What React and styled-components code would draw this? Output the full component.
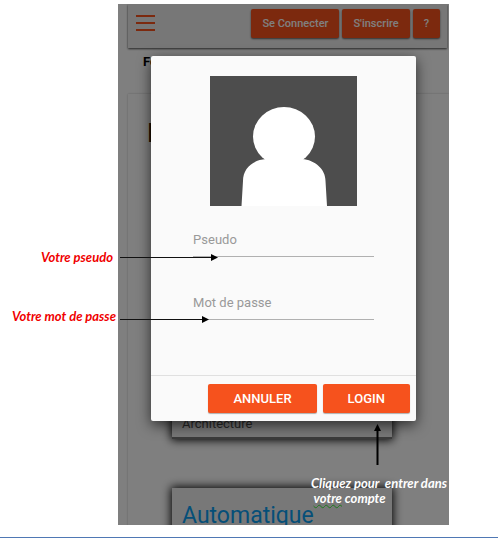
import React from "react";
import styled, { createGlobalStyle } from "styled-components";

const GlobalStyle = createGlobalStyle`
  *, *::before, *::after { box-sizing: border-box; }
  body { margin: 0; background: #fff; font-family: Roboto, "Open Sans", sans-serif; }
  h1, h2, p { margin: 0; }
`;

const Page = styled.div`
  position: relative;
  display: flex;
  flex-direction: column;
  gap: 12px;
  height: 100vh;
  padding-top: 4px;
`;

const Screen = styled.main`
  position: relative;
  flex: 1;
  min-height: 0;
  margin: 0 49px 0 118px;
  overflow: hidden;
  background: #fff;
`;

const PageRule = styled.hr`
  width: 100%;
  margin: 0;
  border: 0;
  border-top: 1px solid #4f78b4;
`;

const AppContent = styled.div`
  display: flex;
  flex-direction: column;
  padding-left: 10px;
`;

const Toolbar = styled.header`
  display: flex;
  align-items: flex-start;
  gap: 3px;
  height: 44px;
  margin-right: 2px;
  padding: 5px 7px 0 8px;
  background: #efefef;
  box-shadow: 0 1px 2px rgba(0, 0, 0, 0.7);
`;

const MenuButton = styled.button`
  display: flex;
  margin: 5px auto 0 0;
  padding: 0;
  border: 0;
  background: none;
`;

const ToolbarButton = styled.button`
  height: 29px;
  padding: 0 11px;
  border: 0;
  border-radius: 2px;
  background: #f9531c;
  color: #fff;
  font: 500 11px/29px Roboto, sans-serif;
  white-space: nowrap;
  box-shadow: 0 1px 2px rgba(0, 0, 0, 0.6);
`;

const Subtitle = styled.h1`
  height: 46px;
  padding: 6px 0 0 15px;
  color: #000;
  font-size: 13px;
  line-height: 16px;
  font-weight: 700;
`;

const Panel = styled.section`
  padding: 24px 57px 0 19px;
  box-shadow: 0 0 2px rgba(0, 0, 0, 0.25);
`;

const PanelTitle = styled.h2`
  color: #331a00;
  font-size: 26px;
  line-height: 30px;
  font-weight: 500;
`;

const CardList = styled.div`
  display: flex;
  flex-direction: column;
  gap: 49px;
  padding: 152px 0 0 25px;
`;

const Card = styled.article`
  padding: ${(p) => (p.$tall ? "116px 10px 5px" : "14px 10px")};
  border-bottom: 2px solid #777;
  background: #f0f0f0;
  box-shadow: 0 0 9px 1px #000;
`;

const CardText = styled.p`
  color: #555;
  font-size: 13px;
  line-height: 16px;
`;

const CardLink = styled.a`
  color: #0a9ef0;
  font-size: 23px;
  line-height: 28px;
  text-decoration: none;
`;

const Backdrop = styled.div`
  position: absolute;
  inset: 0;
  display: flex;
  align-items: flex-start;
  padding: 52px 10% 0;
  background: rgba(0, 0, 0, 0.5);
`;

const Dialog = styled.form`
  flex: 1;
  border-radius: 2px;
  background: #fafafa;
  box-shadow: 0 4px 14px rgba(0, 0, 0, 0.65);
`;

const DialogBody = styled.div`
  display: flex;
  flex-direction: column;
  padding: 20px 42px 55px;
`;

const Avatar = styled.svg`
  align-self: center;
  display: block;
  width: 147px;
  height: 130px;
  margin-bottom: 20px;
`;

const Field = styled.input`
  width: 100%;
  height: 31px;
  margin-bottom: ${(p) => (p.$last ? "0" : "32px")};
  padding: 0 0 4px;
  border: 0;
  border-bottom: 1px solid #b0b0b0;
  border-radius: 0;
  outline: 0;
  background: transparent;
  font: 13px/16px Roboto, sans-serif;
  &::placeholder { color: #999; opacity: 1; }
`;

const DialogActions = styled.footer`
  display: flex;
  justify-content: flex-end;
  gap: 6px;
  padding: 8px 6px;
  border-top: 1px solid #e0e0e0;
`;

const ActionButton = styled.button`
  height: 29px;
  padding: 0 25px;
  border: 0;
  border-radius: 2px;
  background: #f6521d;
  color: #fff;
  font: 500 13px/29px Roboto, sans-serif;
  box-shadow: 0 1px 1px rgba(0, 0, 0, 0.3);
`;

/* Callouts are laid over the screen they explain. */
const Callout = styled.div`
  position: absolute;
  top: ${(p) => p.$top}px;
  left: ${(p) => p.$left}px;
  display: flex;
  flex-direction: ${(p) => (p.$column ? "column" : "row")};
  align-items: ${(p) => p.$align || "center"};
  gap: ${(p) => p.$gap}px;
  pointer-events: none;
`;

const CalloutText = styled.p`
  color: ${(p) => p.$color};
  font: italic 700 13px/15px Lato, "Open Sans", sans-serif;
  white-space: pre;
`;

const Spelling = styled.span`
  text-decoration: underline wavy #1d7a1d 1px;
  text-underline-offset: 1px;
`;

const Arrow = styled.svg`
  display: block;
  flex: none;
  margin-left: ${(p) => p.$indent || 0}px;
`;

function RightArrow({ length }) {
  return (
    <Arrow width={length} height="9" aria-hidden="true">
      <path d={`M0 4.5H${length - 6}`} stroke="#111" strokeWidth="1.2" />
      <path d={`M${length - 7} 1L${length} 4.5L${length - 7} 8Z`} fill="#000" />
    </Arrow>
  );
}

export default function App() {
  return (
    <>
      <GlobalStyle />
      <Page>
        <Screen>
          <AppContent>
            <Toolbar>
              <MenuButton type="button" aria-label="Menu">
                <svg width="19" height="18" fill="#f9531c" aria-hidden="true">
                  <path d="M0 1h19v2H0zM0 8h19v2H0zM0 15h19v2H0z" />
                </svg>
              </MenuButton>
              <ToolbarButton type="button">Se Connecter</ToolbarButton>
              <ToolbarButton type="button">S'inscrire</ToolbarButton>
              <ToolbarButton type="button">?</ToolbarButton>
            </Toolbar>
            <Subtitle>Fo</Subtitle>
            <Panel>
              <PanelTitle>I</PanelTitle>
              <CardList>
                <Card $tall>
                  <CardText>Architecture</CardText>
                </Card>
                <Card>
                  <CardLink href="#automatique">Automatique</CardLink>
                </Card>
              </CardList>
            </Panel>
          </AppContent>
          <Backdrop>
            <Dialog role="dialog" aria-label="Login" onSubmit={(e) => e.preventDefault()}>
              <DialogBody>
                <Avatar viewBox="0 0 147 130" aria-hidden="true">
                  <path d="M0 0h147v130H0z" fill="#4d4d4d" />
                  <ellipse cx="74" cy="60.5" rx="31" ry="29.5" fill="#fff" />
                  <path d="M31.5 130L33 105C33 92 43 84 56 83H92C105 84 115.5 93 115.5 105L117 130Z" fill="#fff" />
                </Avatar>
                <Field type="text" placeholder="Pseudo" aria-label="Pseudo" />
                <Field $last type="password" placeholder="Mot de passe" aria-label="Mot de passe" />
              </DialogBody>
              <DialogActions>
                <ActionButton type="button">ANNULER</ActionButton>
                <ActionButton type="submit">LOGIN</ActionButton>
              </DialogActions>
            </Dialog>
          </Backdrop>
        </Screen>
        <PageRule />
        <Callout $top={250} $left={41} $gap={7}>
          <CalloutText $color="#f00000">Votre pseudo</CalloutText>
          <RightArrow length={98} />
        </Callout>
        <Callout $top={309} $left={12} $gap={4} $align="flex-end">
          <CalloutText $color="#f00000">Votre mot de passe</CalloutText>
          <RightArrow length={89} />
        </Callout>
        <Callout $column $top={424} $left={311} $gap={10} $align="flex-start">
          <Arrow $indent={62} width="9" height="42" aria-hidden="true">
            <path d="M4.5 6V41" stroke="#000" strokeWidth="2" />
            <path d="M1 7L4.5 0L8 7Z" fill="#000" />
          </Arrow>
          <CalloutText $color="#fff">
            {"Cliquez pour  entrer dans\n "}
            <Spelling>votre</Spelling> compte
          </CalloutText>
        </Callout>
      </Page>
    </>
  );
}
